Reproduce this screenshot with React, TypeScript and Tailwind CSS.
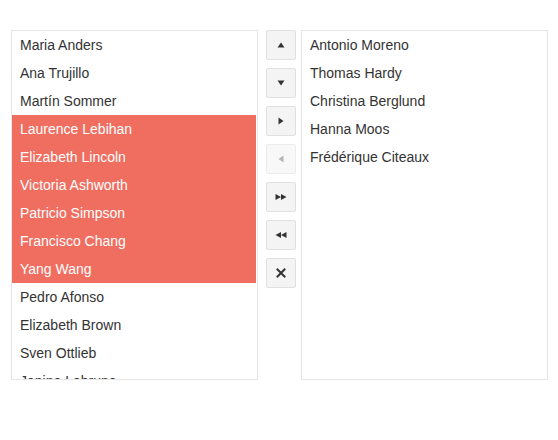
import type { ReactNode } from 'react';

const leftItems = [
  'Maria Anders',
  'Ana Trujillo',
  'Martín Sommer',
  'Laurence Lebihan',
  'Elizabeth Lincoln',
  'Victoria Ashworth',
  'Patricio Simpson',
  'Francisco Chang',
  'Yang Wang',
  'Pedro Afonso',
  'Elizabeth Brown',
  'Sven Ottlieb',
  'Janine Labrune',
];

const selected = new Set([3, 4, 5, 6, 7, 8]);

const rightItems = ['Antonio Moreno', 'Thomas Hardy', 'Christina Berglund', 'Hanna Moos', 'Frédérique Citeaux'];

function ListBox({ items, sel }: { items: string[]; sel?: Set<number> }) {
  return (
    <div className="w-[247px] h-[350px] border border-[#e6e6e6] bg-white overflow-hidden">
      <ul className="pr-px">
        {items.map((name, i) => (
          <li
            key={name}
            className={
              sel?.has(i)
                ? 'h-7 leading-7 pl-2 bg-[#ef6e5f] text-white'
                : 'h-7 leading-7 pl-2 text-[#333333]'
            }
          >
            {name}
          </li>
        ))}
      </ul>
    </div>
  );
}

function ToolButton({ children, disabled }: { children: ReactNode; disabled?: boolean }) {
  return (
    <button
      type="button"
      className={
        disabled
          ? 'w-[30px] h-[30px] flex items-center justify-center rounded-[2px] border border-[#ececec] bg-[#f8f8f8] text-[#b5b5b5]'
          : 'w-[30px] h-[30px] flex items-center justify-center rounded-[2px] border border-[#e0e0e0] bg-[#f4f4f4] text-[#333333]'
      }
    >
      {children}
    </button>
  );
}

const Tri = ({ d }: { d: string }) => (
  <svg width="12" height="12" viewBox="0 0 12 12" fill="currentColor">
    <path d={d} />
  </svg>
);

export default function App() {
  return (
    <div className="w-[558px] h-[440px] bg-white pt-[30px] pl-[11px] text-[14px]" style={{ fontFamily: '"Liberation Sans", Arial, sans-serif' }}>
      <div className="flex items-start">
        <ListBox items={leftItems} sel={selected} />
        <div className="flex flex-col gap-2 ml-2 mr-[5px]">
          <ToolButton><Tri d="M6 3.5 L9.5 8.5 L2.5 8.5 Z" /></ToolButton>
          <ToolButton><Tri d="M2.5 3.5 L9.5 3.5 L6 8.5 Z" /></ToolButton>
          <ToolButton><Tri d="M3.5 2.5 L8.5 6 L3.5 9.5 Z" /></ToolButton>
          <ToolButton disabled><Tri d="M8.5 2.5 L3.5 6 L8.5 9.5 Z" /></ToolButton>
          <ToolButton><Tri d="M0.5 3 L6 6 L0.5 9 Z M6 3 L11.5 6 L6 9 Z" /></ToolButton>
          <ToolButton><Tri d="M11.5 3 L6 6 L11.5 9 Z M6 3 L0.5 6 L6 9 Z" /></ToolButton>
          <ToolButton>
            <svg width="10" height="10" viewBox="0 0 10 10" stroke="currentColor" strokeWidth="2" strokeLinecap="square">
              <path d="M1.5 1.5 L8.5 8.5 M8.5 1.5 L1.5 8.5" />
            </svg>
          </ToolButton>
        </div>
        <ListBox items={rightItems} />
      </div>
    </div>
  );
}
